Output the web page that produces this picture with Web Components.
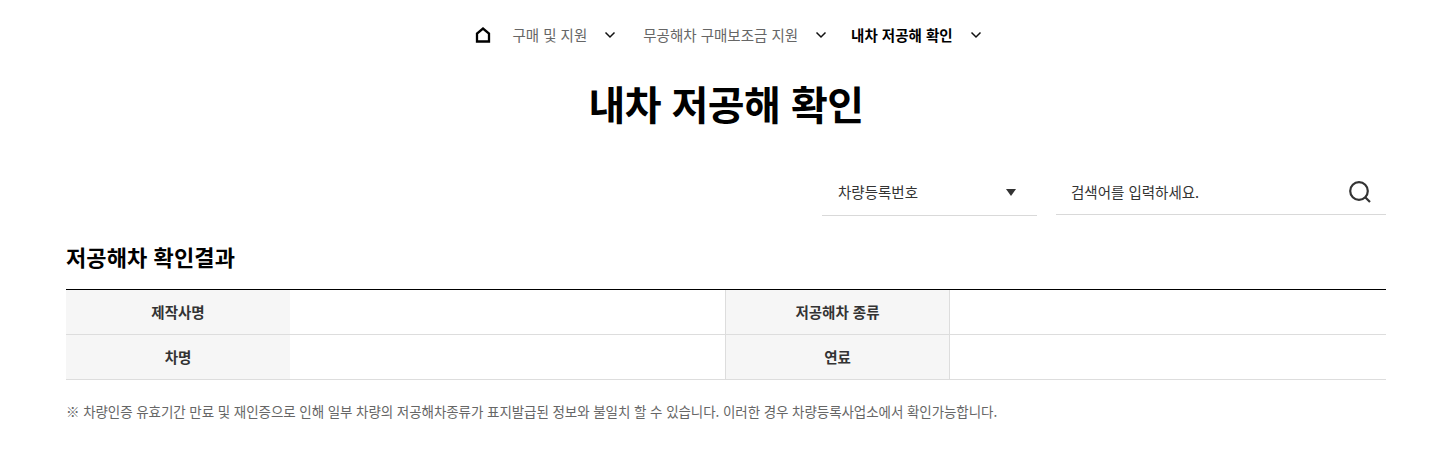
<!DOCTYPE html>
<html lang="ko">
<head>
<meta charset="utf-8">
<title>내차 저공해 확인</title>
<style>
    html, body { margin: 0; padding: 0; background: #fff; }
    body { font-family: "Noto Sans CJK KR", "Noto Sans", sans-serif; color: #111; }
</style>
</head>
<body>
<low-page>
    <bread-crumbs>
        <crumb-item>구매 및 지원</crumb-item>
        <crumb-item class="second">무공해차 구매보조금 지원</crumb-item>
        <crumb-item current>내차 저공해 확인</crumb-item>
    </bread-crumbs>
    <h1>내차 저공해 확인</h1>
    <search-bar label="차량등록번호" placeholder="검색어를 입력하세요."></search-bar>
    <result-table heading="저공해차 확인결과"></result-table>
    <p>※ 차량인증 유효기간 만료 및 재인증으로 인해 일부 차량의 저공해차종류가 표지발급된 정보와 불일치 할 수 있습니다. 이러한 경우 차량등록사업소에서 확인가능합니다.</p>
</low-page>
<script>
class LowPage extends HTMLElement {
    constructor() {
        super();
        this.attachShadow({ mode: 'open' });
        this.shadowRoot.innerHTML = `
            <style>
                :host { display: block; padding: 0 44px 0 66px; }
                ::slotted(h1) { margin: 0; padding-top: 3px; font-size: 40px; line-height: 60px; font-weight: 700; letter-spacing: -0.55px; color: #000; text-align: center; }
                ::slotted(p) { margin: 0; padding-top: 21px; font-size: 13.5px; line-height: 20px; color: #666; letter-spacing: -0.07px; }
            </style>
            <slot></slot>
        `;
    }
}

class BreadCrumbs extends HTMLElement {
    constructor() {
        super();
        this.attachShadow({ mode: 'open' });
        this.shadowRoot.innerHTML = `
            <style>
                :host { display: flex; justify-content: center; align-items: center; height: 70px; padding-left: 5px; }
                svg { display: block; margin-right: 21px; }
                ::slotted(.second) { margin-right: 24px; }
            </style>
            <svg width="16" height="16" viewBox="0 0 16 16"><path d="M2 14.5V6.5L8 1.5L14 6.5V14.5Z" fill="none" stroke="#000" stroke-width="2.3"/></svg>
            <slot></slot>
        `;
    }
}

class CrumbItem extends HTMLElement {
    constructor() {
        super();
        this.attachShadow({ mode: 'open' });
        this.shadowRoot.innerHTML = `
            <style>
                :host { display: inline-flex; align-items: center; font-size: 14.5px; color: #666; margin-right: 27px; white-space: nowrap; }
                :host([current]) { color: #000; font-weight: 700; margin-right: 0; }
                slot { display: block; padding-bottom: 2px; }
                svg { display: block; margin-left: 17px; }
            </style>
            <slot></slot>
            <svg width="12" height="8" viewBox="0 0 12 8"><path d="M1.5 1.5L6 6L10.5 1.5" fill="none" stroke="#111" stroke-width="1.5"/></svg>
        `;
    }
}

class SearchBar extends HTMLElement {
    constructor() {
        super();
        this.attachShadow({ mode: 'open' });
        this.shadowRoot.innerHTML = `
            <style>
                :host { display: flex; justify-content: flex-end; gap: 19px; padding-top: 36px; font-size: 14.5px; color: #333; }
                .select, .input { display: flex; align-items: center; justify-content: space-between; height: 46px; box-sizing: border-box; border-bottom: 1px solid #d9d9d9; }
                .select { width: 215px; padding: 0 21px 0 16px; height: 47px; }
                .select span { padding-bottom: 2px; }
                .input { width: 330px; padding: 0 15px; }
                .arrow { width: 0; height: 0; border-left: 5px solid transparent; border-right: 5px solid transparent; border-top: 7px solid #333; }
                svg { display: block; }
            </style>
            <div class="select"><span id="label"></span><i class="arrow"></i></div>
            <div class="input"><span id="placeholder"></span>
                <svg width="22" height="22" viewBox="0 0 22 22"><circle cx="10" cy="10" r="8.8" fill="none" stroke="#333" stroke-width="2.2"/><path d="M16 16L21 21" stroke="#333" stroke-width="2.2"/></svg>
            </div>
        `;
    }

    connectedCallback() {
        this.shadowRoot.querySelector('#label').textContent = this.getAttribute('label');
        this.shadowRoot.querySelector('#placeholder').textContent = this.getAttribute('placeholder');
    }
}

class ResultTable extends HTMLElement {
    constructor() {
        super();
        this.attachShadow({ mode: 'open' });
        this.shadowRoot.innerHTML = `
            <style>
                :host { display: block; }
                h2 { margin: 0; padding-top: 21px; font-size: 22px; line-height: 38px; font-weight: 700; color: #000; letter-spacing: 0.1px; }
                .grid { display: grid; grid-template-columns: 224px 435px 225px 436px; margin-top: 14px; border-top: 1px solid #000; font-size: 14.5px; font-weight: 700; color: #333; }
                .grid > div { height: 45px; box-sizing: border-box; display: flex; align-items: center; justify-content: center; border-bottom: 1px solid #ddd; }
                .th { background: #f6f6f6; padding-bottom: 2px; }
                .th.mid { border-left: 1px solid #ddd; border-right: 1px solid #ddd; }
            </style>
            <h2 id="heading"></h2>
            <div class="grid">
                <div class="th">제작사명</div><div></div><div class="th mid">저공해차 종류</div><div></div>
                <div class="th">차명</div><div></div><div class="th mid">연료</div><div></div>
            </div>
        `;
    }

    connectedCallback() {
        this.shadowRoot.querySelector('#heading').textContent = this.getAttribute('heading');
    }
}

customElements.define('low-page', LowPage);
customElements.define('bread-crumbs', BreadCrumbs);
customElements.define('crumb-item', CrumbItem);
customElements.define('search-bar', SearchBar);
customElements.define('result-table', ResultTable);
</script>
</body>
</html>
